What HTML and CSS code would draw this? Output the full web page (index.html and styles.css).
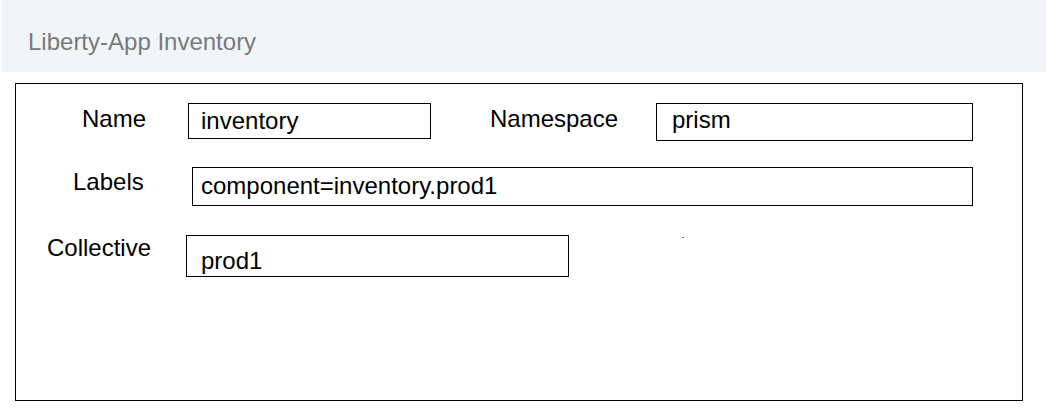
FILE: index.html
```html
<!DOCTYPE html>
<html lang="en">
<head>
<meta charset="utf-8">
<title>Liberty-App Inventory</title>
<link rel="stylesheet" href="styles.css">
</head>
<body>
  <header class="page-header">
    <h1 class="page-title">Liberty-App Inventory</h1>
  </header>
  <section class="panel">
    <div class="row row-1">
      <div class="label label-name">Name</div>
      <div class="field field-name">inventory</div>
      <div class="label label-namespace">Namespace</div>
      <div class="field field-namespace">prism</div>
    </div>
    <div class="row row-2">
      <div class="label label-labels">Labels</div>
      <div class="field field-labels">component=inventory.prod1</div>
    </div>
    <div class="row row-3">
      <div class="label label-collective">Collective</div>
      <div class="field field-collective">prod1</div>
      <span class="speck"></span>
    </div>
  </section>
</body>
</html>
```
FILE: styles.css
```css
* { box-sizing: border-box; }

html, body {
  margin: 0;
  padding: 0;
  background: #ffffff;
  font-family: "Liberation Sans", Arial, Helvetica, sans-serif;
  color: #000;
}

body {
  width: 1046px;
  height: 411px;
  overflow: hidden;
}

.page-header {
  margin-left: 2px;
  height: 72px;
  background: #f2f5f8;
  padding: 28px 0 0 26px;
}

.page-title {
  margin: 0;
  font-size: 24px;
  line-height: 28px;
  font-weight: normal;
  color: #777a7d;
}

.panel {
  margin: 11px 23px 0 15px;
  height: 318px;
  border: 1px solid #000;
  padding-top: 19px;
}

.row {
  display: flex;
  align-items: flex-start;
}

.label {
  font-size: 24px;
  line-height: 28px;
  white-space: nowrap;
}

.field {
  border: 1px solid #000;
  font-size: 24px;
  line-height: 28px;
  white-space: nowrap;
}

/* row 1 */
.label-name {
  margin: 2px 0 0 66px;
  width: 106px;
}
.field-name {
  width: 243px;
  height: 36px;
  padding: 3px 0 0 12px;
}
.label-namespace {
  margin: 2px 0 0 59px;
  width: 166px;
}
.field-namespace {
  width: 317px;
  height: 38px;
  padding: 2px 0 0 15px;
}

/* row 2 */
.row-2 { margin-top: 26px; }
.label-labels {
  margin: 1px 0 0 57px;
  width: 119px;
}
.field-labels {
  width: 781px;
  height: 39px;
  padding: 4px 0 0 8px;
}

/* row 3 */
.row-3 { margin-top: 29px; }
.label-collective {
  margin: -1px 0 0 31px;
  width: 139px;
}
.field-collective {
  width: 383px;
  height: 42px;
  padding: 11px 0 0 14px;
}

.speck {
  display: block;
  width: 2px;
  height: 1px;
  margin: 2px 0 0 113px;
  background: #666;
}
```
